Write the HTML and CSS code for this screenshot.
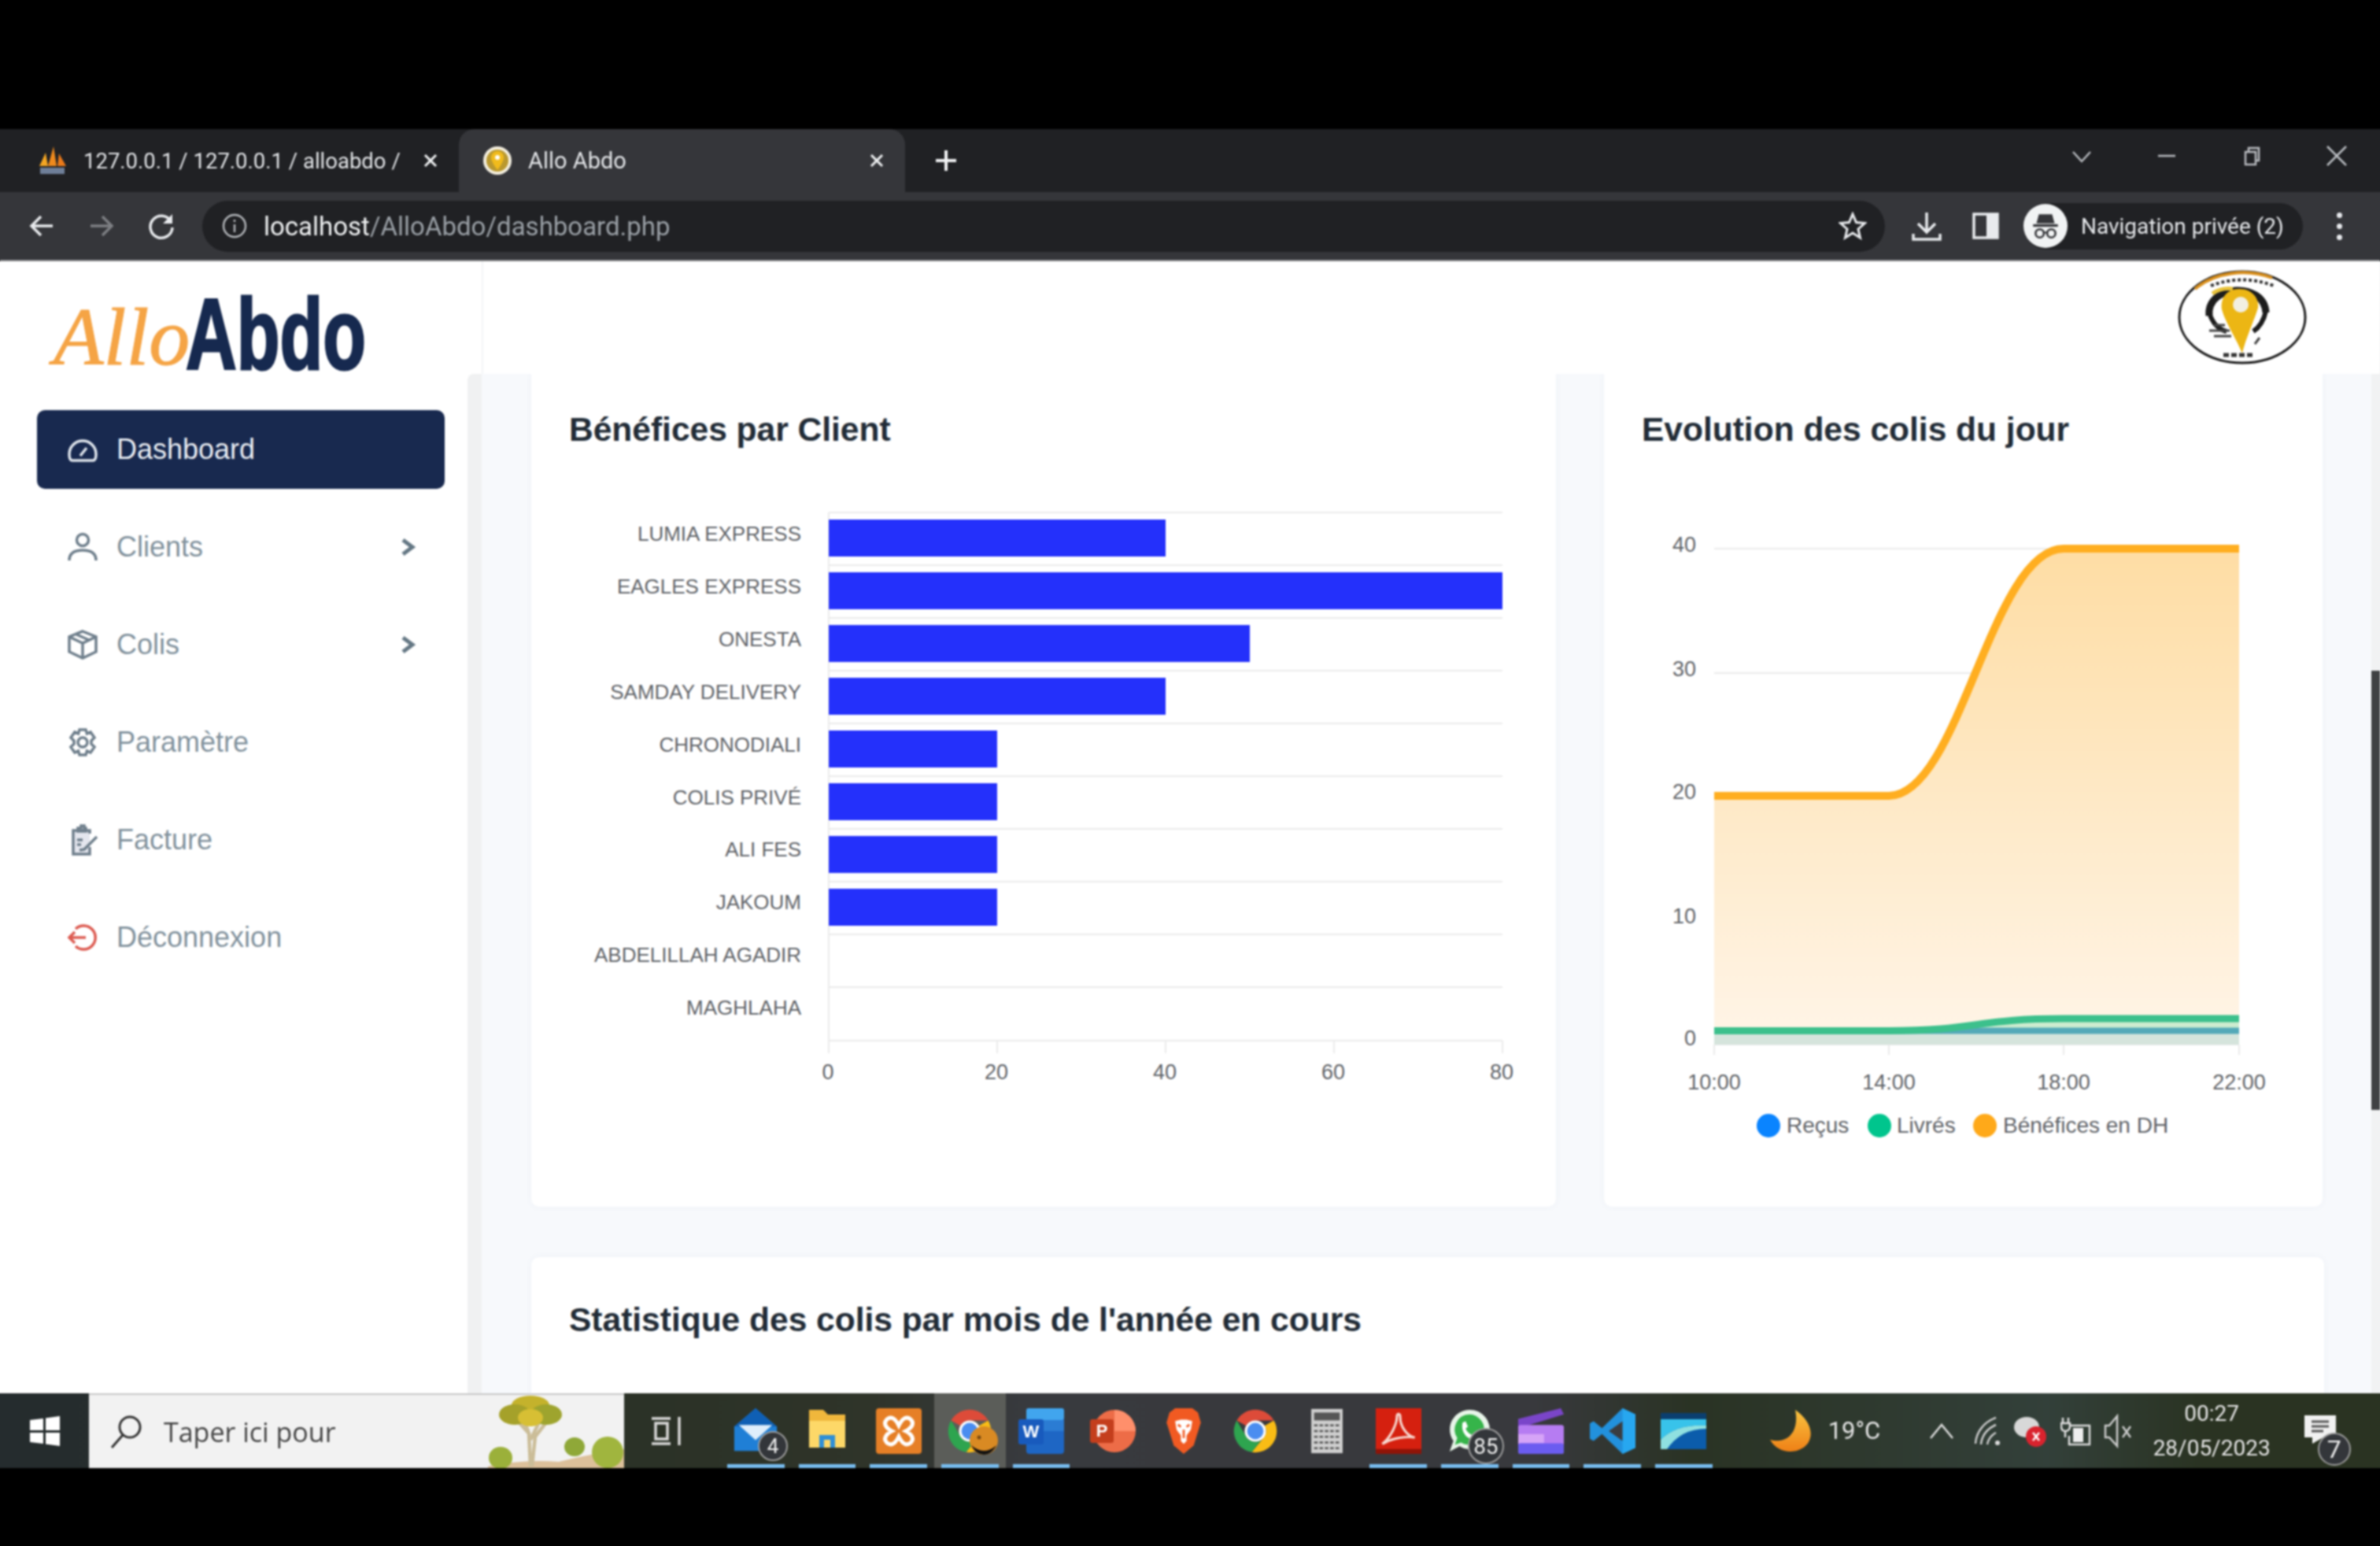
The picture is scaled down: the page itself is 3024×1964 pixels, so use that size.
FILE: index.html
```html
<!DOCTYPE html>
<html lang="fr">
<head>
    <meta charset="UTF-8">
    <title>Allo Abdo</title>
    <link rel="stylesheet" href="styles.css">
</head>
<body>
    <div class="screen">
    <div class="black-top"></div>

    <!-- Browser tabs -->
    <div class="tabstrip">
        <div class="tab">
            <svg class="favicon" viewBox="0 0 38 38">
                <polygon points="20,1 24,26 13,26" fill="#f08a1d"/>
                <polygon points="10,9 13,26 2,26" fill="#f5a623"/>
                <polygon points="27,10 36,26 25,26" fill="#e9791a"/>
                <rect x="3" y="28" width="31" height="8" fill="#6f7f99"/>
            </svg>
            <span class="tab-title tab-title-small">127.0.0.1 / 127.0.0.1 / alloabdo /</span>
            <span class="tab-close">
                <svg viewBox="0 0 20 20"><path d="M3 3L17 17M17 3L3 17"/></svg>
            </span>
        </div>
        <div class="tab tab-active">
            <svg class="favicon" viewBox="0 0 38 38">
                <circle cx="19" cy="19" r="18" fill="#f4efe0"/>
                <circle cx="19" cy="19" r="14" fill="#b9982f"/>
                <path d="M19 7a8 8 0 0 1 8 8c0 6-8 16-8 16s-8-10-8-16a8 8 0 0 1 8-8z" fill="#f1bb1c"/>
                <circle cx="19" cy="15" r="3" fill="#fff"/>
            </svg>
            <span class="tab-title">Allo Abdo</span>
            <span class="tab-close">
                <svg viewBox="0 0 20 20"><path d="M3 3L17 17M17 3L3 17"/></svg>
            </span>
        </div>
        <svg class="tab-plus" viewBox="0 0 30 30"><path d="M15 2V28M2 15H28"/></svg>
        <div class="window-controls">
            <svg viewBox="0 0 30 30"><path d="M4 10L15 22L26 10"/></svg>
            <svg viewBox="0 0 30 30"><path d="M4 15H26"/></svg>
            <svg viewBox="0 0 30 30"><path d="M7 10H20V26H7zM11 10V5H24V21H20"/></svg>
            <svg viewBox="0 0 30 30"><path d="M3 3L27 27M27 3L3 27"/></svg>
        </div>
    </div>

    <!-- Browser toolbar -->
    <div class="toolbar">
        <svg class="tool-icon" viewBox="0 0 36 36"><path d="M32 18H5M17 6L5 18L17 30"/></svg>
        <svg class="tool-icon tool-off" viewBox="0 0 36 36"><path d="M4 18H31M19 6L31 18L19 30"/></svg>
        <svg class="tool-icon" viewBox="0 0 36 36"><path d="M30 12A14 14 0 1 0 32 20"/><path class="icon-fill" d="M32 3V15H20z"/></svg>
        <div class="address">
            <svg class="info-icon" viewBox="0 0 34 34"><circle cx="17" cy="17" r="14"/><path d="M17 15V25M17 9V12"/></svg>
            <span class="url"><b>localhost</b>/AlloAbdo/dashboard.php</span>
            <svg class="star-icon" viewBox="0 0 36 36"><path d="M18 3L22.500 13.500L33.500 14.500L25 22L27.500 33L18 27L8.500 33L11 22L2.500 14.500L13.500 13.500z"/></svg>
        </div>
        <svg class="tool-icon tool-download" viewBox="0 0 40 40"><path d="M20 3V27M9 17L20 28L31 17M3 30V37H37V30"/></svg>
        <svg class="tool-icon tool-panel" viewBox="0 0 36 36"><path d="M3 3H33V33H3z"/><path class="icon-fill" d="M19 3H33V33H19z"/></svg>
        <div class="incognito">
            <span class="incognito-avatar">
                <svg viewBox="0 0 40 40">
                    <path d="M12 6H28L31 17H9z" fill="#35363a"/>
                    <rect x="5" y="18" width="30" height="3" fill="#35363a"/>
                    <circle cx="13" cy="29" r="5" fill="none" stroke="#35363a" stroke-width="2.500"/>
                    <circle cx="27" cy="29" r="5" fill="none" stroke="#35363a" stroke-width="2.500"/>
                    <path d="M18 28H22" stroke="#35363a" stroke-width="2"/>
                </svg>
            </span>
            <span class="incognito-text">Navigation privée (2)</span>
        </div>
        <div class="menu-dots"><i></i><i></i><i></i></div>
    </div>

    <!-- Page -->
    <div class="app">
        <aside class="sidebar">
            <div class="logo"><span class="logo-allo">Allo</span><span class="logo-abdo">Abdo</span></div>
            <nav class="menu">
                <a class="menu-item active" href="#">
                    <svg class="menu-icon" viewBox="0 0 40 40"><path d="M3 26A17 17 0 0 1 37 26Q37 34 33 34H7Q3 34 3 26z"/><path d="M17 28L25 18"/></svg>
                    Dashboard
                </a>
                <a class="menu-item" href="#">
                    <svg class="menu-icon" viewBox="0 0 40 40"><circle cx="20" cy="11" r="7.500"/><path d="M3 37C3 27 11 24 20 24S37 27 37 37"/></svg>
                    Clients
                    <svg class="chevron" viewBox="0 0 20 24"><path d="M3 3L15 12L3 21"/></svg>
                </a>
                <a class="menu-item" href="#">
                    <svg class="menu-icon" viewBox="0 0 40 40"><path d="M20 3L37 10V29L20 37L3 29V10zM3 10L20 18L37 10M20 18V37M11 6.500L28 14"/></svg>
                    Colis
                    <svg class="chevron" viewBox="0 0 20 24"><path d="M3 3L15 12L3 21"/></svg>
                </a>
                <a class="menu-item" href="#">
                    <svg class="menu-icon" viewBox="0 0 40 40"><path d="M16 4H24L25.500 9L30 7L35 14L31 18V22L35 26L30 33L25.500 31L24 36H16L14.500 31L10 33L5 26L9 22V18L5 14L10 7L14.500 9z"/><circle cx="20" cy="20" r="6"/></svg>
                    Paramètre
                </a>
                <a class="menu-item" href="#">
                    <svg class="menu-icon" viewBox="0 0 40 40"><path d="M29 12V8H8V38H29V29" fill="#e4e6ee"/><path d="M14 9V5H18V2H22V5H24V9zM13 20H20M13 26H18M16 33L22 32L38 16"/></svg>
                    Facture
                </a>
                <a class="menu-item" href="#">
                    <svg class="menu-icon icon-red" viewBox="0 0 40 40"><path d="M11 9A15 15 0 1 1 11 31M24 20H3M10 13L3 20L10 27"/></svg>
                    Déconnexion
                </a>
            </nav>
            <div class="sidebar-scroll"></div>
        </aside>

        <div class="main">
            <header class="topbar">
                <svg class="avatar" viewBox="0 0 164 120">
                    <ellipse cx="82" cy="60" rx="80" ry="58" fill="#fff" stroke="#1c1c1c" stroke-width="3"/>
                    <path d="M22 24A79 57 0 0 1 120 10" fill="none" stroke="#d98f1c" stroke-width="4"/>
                    <path d="M42 20Q82 5 122 20" fill="none" stroke="#333" stroke-width="4" stroke-dasharray="4 3"/>
                    <g transform="translate(-6 0)">
                        <path d="M46 58C42 18 116 14 118 54" fill="none" stroke="#1c1c1c" stroke-width="9"/>
                        <path d="M46 54Q52 74 68 78M118 52Q114 70 102 78" fill="none" stroke="#1c1c1c" stroke-width="6"/>
                        <path d="M50 30Q62 22 76 24" fill="none" stroke="#e8c23a" stroke-width="5"/>
                        <path d="M84 24C102 24 110 38 108 48C104 62 92 88 88 106C82 90 66 66 62 50C60 36 68 24 84 24z" fill="#ecb614"/>
                        <circle cx="86" cy="44" r="10" fill="#f2efe2"/>
                        <path d="M52 70H66M46 77H72M52 84H74M104 94L110 86" stroke="#444" stroke-width="3"/>
                    </g>
                    <path d="M58 108H98" stroke="#333" stroke-width="5" stroke-dasharray="7 3"/>
                </svg>
            </header>
            <div class="content">
                <div class="row">
                    <section class="card card-clients">
                        <h2>Bénéfices par Client</h2>
                        <svg class="chart" viewBox="675 600 1302 880">
                            <g class="grid">
                                <path d="M1053 651V1322M1053 651H1909M1053 718H1909M1053 785H1909M1053 852H1909M1053 919H1909M1053 986H1909M1053 1053H1909M1053 1120H1909M1053 1187H1909M1053 1254H1909M1053 1322H1909"/>
                                <path d="M1053 1322V1338M1267 1322V1338M1481 1322V1338M1695 1322V1338M1909 1322V1338"/>
                            </g>
                            <g class="bars">
                                <rect x="1053" y="660" width="428" height="47"/>
                                <rect x="1053" y="727" width="856" height="47"/>
                                <rect x="1053" y="794" width="535" height="47"/>
                                <rect x="1053" y="861" width="428" height="47"/>
                                <rect x="1053" y="928" width="214" height="47"/>
                                <rect x="1053" y="995" width="214" height="47"/>
                                <rect x="1053" y="1062" width="214" height="47"/>
                                <rect x="1053" y="1129" width="214" height="47"/>
                            </g>
                            <g class="labels labels-end labels-client">
                                <text x="1018" y="687">LUMIA EXPRESS</text>
                                <text x="1018" y="754">EAGLES EXPRESS</text>
                                <text x="1018" y="821">ONESTA</text>
                                <text x="1018" y="888">SAMDAY DELIVERY</text>
                                <text x="1018" y="955">CHRONODIALI</text>
                                <text x="1018" y="1022">COLIS PRIVÉ</text>
                                <text x="1018" y="1088">ALI FES</text>
                                <text x="1018" y="1155">JAKOUM</text>
                                <text x="1018" y="1222">ABDELILLAH AGADIR</text>
                                <text x="1018" y="1289">MAGHLAHA</text>
                            </g>
                            <g class="labels labels-middle">
                                <text x="1052" y="1371">0</text>
                                <text x="1266" y="1371">20</text>
                                <text x="1480" y="1371">40</text>
                                <text x="1694" y="1371">60</text>
                                <text x="1908" y="1371">80</text>
                            </g>
                        </svg>
                    </section>
                    <section class="card card-evolution">
                        <h2>Evolution des colis du jour</h2>
                        <svg class="chart" viewBox="2038 600 913 880">
                            <defs>
                                <linearGradient id="orangeFill" x1="0" y1="0" x2="0" y2="1">
                                    <stop offset="0" stop-color="#fedda4"/>
                                    <stop offset="1" stop-color="#fff5e8"/>
                                </linearGradient>
                            </defs>
                            <g class="grid">
                                <path d="M2178 697H2845M2178 855H2845M2178 1011H2845M2178 1169H2845"/>
                                <path d="M2178 1327H2845M2178 1327V1340M2400 1327V1340M2622 1327V1340M2845 1327V1340"/>
                            </g>
                            <path d="M2178 1011H2400C2490 1011 2530 697 2622 697H2845V1327H2178z" fill="url(#orangeFill)"/>
                            <path d="M2178 1011H2400C2490 1011 2530 697 2622 697H2845" class="line line-orange"/>
                            <path d="M2178 1309H2400C2511 1309 2511 1294 2622 1294H2845V1327H2178z" fill="#cdeccf"/>
                            <path d="M2178 1309H2845V1327H2178z" fill="#d5e4dc"/>
                            <path d="M2400 1309.500H2845" class="line line-blue"/>
                            <path d="M2178 1309.500H2400C2511 1309.500 2511 1294 2622 1294H2845" class="line line-green"/>
                            <g class="labels labels-end">
                                <text x="2155" y="701">40</text>
                                <text x="2155" y="859">30</text>
                                <text x="2155" y="1015">20</text>
                                <text x="2155" y="1173">10</text>
                                <text x="2155" y="1328">0</text>
                            </g>
                            <g class="labels labels-middle">
                                <text x="2178" y="1384">10:00</text>
                                <text x="2400" y="1384">14:00</text>
                                <text x="2622" y="1384">18:00</text>
                                <text x="2845" y="1384">22:00</text>
                            </g>
                            <circle cx="2247" cy="1430" r="15" fill="#0a84ff"/>
                            <circle cx="2388" cy="1430" r="15" fill="#00c58d"/>
                            <circle cx="2522" cy="1430" r="15" fill="#ffa919"/>
                            <g class="labels labels-legend">
                                <text x="2270" y="1439">Reçus</text>
                                <text x="2410" y="1439">Livrés</text>
                                <text x="2545" y="1439">Bénéfices en DH</text>
                            </g>
                        </svg>
                    </section>
                </div>
                <section class="card card-wide">
                    <h2>Statistique des colis par mois de l'année en cours</h2>
                </section>
            </div>
            <div class="page-scroll"><div class="page-thumb"></div></div>
        </div>
    </div>

    <!-- Windows taskbar -->
    <div class="taskbar">
        <svg style="display:none">
            <symbol id="chrome" viewBox="0 0 64 64">
                <path d="M58 17A30 30 0 0 1 27 61.600L45 39.500A15 15 0 0 0 45 24.500z" fill="#f9bc15"/>
                <path d="M6 17A30 30 0 0 0 27 61.600L40 45A15 15 0 0 1 19 39.500z" fill="#2ea44f"/>
                <path d="M6 17A30 30 0 0 1 58 17H32A15 15 0 0 0 19 24.500z" fill="#dd4b39"/>
                <circle cx="32" cy="32" r="15" fill="#fff"/>
                <circle cx="32" cy="32" r="11.500" fill="#4a8df0"/>
            </symbol>
        </svg>
        <div class="start">
            <svg viewBox="0 0 38 38"><path d="M0 5L17 3V18H0zM20 2.500L38 0V18H20zM0 21H17V35L0 33zM20 21H38V38L20 35.500z" fill="#fff"/></svg>
        </div>
        <div class="search">
            <svg class="search-glass" viewBox="0 0 40 44"><circle cx="25" cy="16" r="13"/><path d="M16 26L2 42"/></svg>
            <span class="search-text">Taper ici pour</span>
            <svg class="search-tree" viewBox="0 0 173 92">
                <path d="M-10 92Q40 80 90 84Q130 74 173 68V92z" fill="#dcc09a"/>
                <path d="M54 90L52 48L36 30M52 48L44 26M54 56L68 28M56 90L60 52L74 34" fill="none" stroke="#cbbd98" stroke-width="4.500"/>
                <ellipse cx="54" cy="12" rx="24" ry="12" fill="#c4b22c"/>
                <ellipse cx="34" cy="24" rx="20" ry="13" fill="#a5a12a"/>
                <ellipse cx="74" cy="24" rx="20" ry="13" fill="#9ea42e"/>
                <ellipse cx="54" cy="28" rx="16" ry="11" fill="#d7bf34"/>
                <ellipse cx="16" cy="79" rx="15" ry="14" fill="#9bb03a"/>
                <ellipse cx="110" cy="65" rx="13" ry="12" fill="#8fa838"/>
                <ellipse cx="152" cy="72" rx="20" ry="20" fill="#a0b53e"/>
            </svg>
        </div>
        <div class="slot slot-taskview">
            <svg viewBox="0 0 40 40"><path d="M2 4H26M2 36H26M7 10H22V30H7zM37 2V38" fill="none" stroke="#d9d9d9" stroke-width="3.500"/></svg>
        </div>
        <div class="slot slot-open">
            <svg viewBox="0 0 56 60">
                <path d="M28 0L56 24V56H0V24z" fill="#1f7fd6"/>
                <path d="M28 0L56 24H0z" fill="#0f5fb4"/>
                <path d="M6 22H50L28 42z" fill="#dfeefb"/>
            </svg>
            <span class="count count-mail">4</span>
        </div>
        <div class="slot slot-open">
            <svg viewBox="0 0 50 58">
                <path d="M2 2H20L26 8H48V50H2z" fill="#f0b73c"/>
                <path d="M2 16H48V50H2z" fill="#fdd868"/>
                <path d="M15 50V34H35V50H29V40H21V50z" fill="#2f8fd6"/>
            </svg>
        </div>
        <div class="slot slot-open">
            <svg viewBox="0 0 58 58">
                <rect x="0" y="0" width="58" height="58" rx="4" fill="#e67f26"/>
                <path d="M14 14C22 8 27 18 29 22C31 18 36 8 44 14C52 22 38 29 38 29C38 29 52 36 44 44C36 50 31 40 29 36C27 40 22 50 14 44C6 36 20 29 20 29C20 29 6 22 14 14z" fill="none" stroke="#fff" stroke-width="5"/>
            </svg>
        </div>
        <div class="slot slot-open slot-active">
            <svg viewBox="0 0 64 64"><use href="#chrome"/></svg>
            <svg class="chrome-avatar" viewBox="0 0 36 36">
                <circle cx="18" cy="18" r="18" fill="#d98a23"/>
                <path d="M2 24Q18 38 34 24Q28 36 18 36Q8 36 2 24z" fill="#111"/>
                <circle cx="12" cy="14" r="2.500" fill="#7a4a10"/>
            </svg>
        </div>
        <div class="slot slot-open">
            <svg viewBox="0 0 58 58">
                <rect x="10" y="0" width="48" height="58" rx="4" fill="#1e66c4"/>
                <rect x="10" y="0" width="48" height="15" rx="3" fill="#41a5ee"/>
                <rect x="10" y="15" width="48" height="14" fill="#2b7cd3"/>
                <rect x="0" y="14" width="32" height="32" rx="3" fill="#185abd"/>
                <text class="office-letter" x="16" y="37">W</text>
            </svg>
        </div>
        <div class="slot slot-ppt">
            <svg viewBox="0 0 58 58">
                <circle cx="31" cy="29" r="27" fill="#ed6c47"/>
                <path d="M31 2A27 27 0 0 1 58 29H31z" fill="#ff8f6b"/>
                <rect x="0" y="14" width="30" height="30" rx="3" fill="#c43e1c"/>
                <text class="office-letter" x="15" y="36">P</text>
            </svg>
        </div>
        <div class="slot">
            <svg viewBox="0 0 48 64">
                <path d="M12 0H36L44 6L48 20L38 52L24 64L10 52L0 20L4 6z" fill="#f15a22"/>
                <path d="M12 18L20 16H28L36 18L34 30L28 38V46L24 50L20 46V38L14 30z" fill="#fff"/>
                <path d="M20 26L16 23M28 26L32 23M24 30V42" stroke="#f15a22" stroke-width="3"/>
            </svg>
        </div>
        <div class="slot">
            <svg viewBox="0 0 64 64"><use href="#chrome"/></svg>
        </div>
        <div class="slot">
            <svg viewBox="0 0 46 64">
                <rect x="1" y="1" width="44" height="62" fill="#cfcfcf"/>
                <rect x="5" y="6" width="36" height="11" fill="#555"/>
                <path d="M5 24H41M5 32H41M5 40H41M5 48H41M5 56H41" stroke="#555" stroke-width="3" stroke-dasharray="5 2.500"/>
            </svg>
        </div>
        <div class="slot slot-open">
            <svg viewBox="0 0 56 56">
                <rect width="56" height="56" fill="#d5200f"/>
                <rect y="50" width="56" height="6" fill="#8f1408"/>
                <path d="M8 44C18 36 26 20 26 10C26 6 30 6 30 11C30 22 38 34 48 36C40 34 20 36 8 44z" fill="none" stroke="#f7d8d0" stroke-width="3"/>
            </svg>
        </div>
        <div class="slot slot-open">
            <svg viewBox="0 0 58 60">
                <path d="M29 2A26 26 0 1 1 16 50L3 57L8 43A26 26 0 0 1 29 2z" fill="#e8f5e9"/>
                <path d="M29 8A20 20 0 1 1 18 45L10 48L13 39A20 20 0 0 1 29 8z" fill="#36b44a"/>
                <path d="M20 19L24 17L27 24L24 27Q27 33 32 35L35 32L42 36L39 41Q30 42 24 36Q18 29 20 19z" fill="#fff"/>
            </svg>
            <span class="count count-whatsapp">85</span>
        </div>
        <div class="slot slot-open">
            <svg viewBox="0 0 60 60">
                <path d="M0 14L56 0L60 8L8 24H0z" fill="#7a45c9"/>
                <rect y="22" width="60" height="38" rx="3" fill="#b67cf2"/>
                <rect y="34" width="34" height="12" fill="#d6a4f7"/>
                <rect y="46" width="60" height="14" rx="3" fill="#6b5cf0"/>
            </svg>
        </div>
        <div class="slot slot-open">
            <svg viewBox="0 0 60 60">
                <path d="M43 0L60 8V52L43 60L16 34L5 43L0 40V20L5 17L16 26z" fill="#2291dd"/>
                <path d="M43 0L60 8V52L43 60z" fill="#27a7f0"/>
                <path d="M43 17L25 30L43 43z" fill="#3a3c40"/>
            </svg>
        </div>
        <div class="slot slot-open">
            <svg viewBox="0 0 58 46">
                <rect width="58" height="46" fill="#0b5cab"/>
                <rect width="58" height="8" fill="#0b3f6f"/>
                <path d="M0 8H58V16Q20 14 0 34z" fill="#38c3ea"/>
                <path d="M0 34Q20 14 58 16V20Q26 20 8 46H0z" fill="#8fe0e0"/>
            </svg>
        </div>
        <div class="tray">
            <svg class="tray-moon" viewBox="0 0 54 54">
                <defs>
                    <linearGradient id="moonFill" x1="0" y1="0" x2="0" y2="1">
                        <stop offset="0" stop-color="#f9c440"/>
                        <stop offset="1" stop-color="#ef8016"/>
                    </linearGradient>
                </defs>
                <path d="M32 0C50 12 58 32 46 45C34 57 10 56 0 38C20 44 38 30 32 0z" fill="url(#moonFill)"/>
            </svg>
            <span class="tray-temp">19°C</span>
            <svg class="tray-chevron" viewBox="0 0 32 22"><path d="M2 20L16 3L30 20"/></svg>
            <svg class="tray-wifi" viewBox="0 0 36 40"><path d="M2 36C3 20 14 8 28 3M9 37C10 26 17 17 28 12M17 37C18 31 21 26 28 22"/><circle cx="30" cy="35" r="3" fill="#ddd" stroke="none"/></svg>
            <svg class="tray-cloud" viewBox="0 0 42 46">
                <ellipse cx="17" cy="18" rx="16" ry="13" fill="#d8d8d8"/>
                <circle cx="29" cy="30" r="13" fill="#d9232e"/>
                <path d="M25 25L33 35M33 25L25 35" stroke="#fff" stroke-width="2.500"/>
            </svg>
            <svg class="tray-battery" viewBox="0 0 40 38">
                <path d="M11 12H37V36H11V25" fill="none" stroke="#ddd" stroke-width="2.500"/>
                <path d="M16 15H29V33H16z" fill="#eee"/>
                <path d="M3 2V9M10 2V9M1 9H12V13Q12 19 6 19Q1 19 1 13zM6 19V27" fill="none" stroke="#ddd" stroke-width="2.500"/>
            </svg>
            <svg class="tray-sound" viewBox="0 0 36 44"><path d="M17 3V41L7 30H2V15H7z"/><path d="M24 16L34 30M34 16L24 30"/></svg>
            <div class="clock">
                <span>00:27</span>
                <span>28/05/2023</span>
            </div>
            <div class="notif">
                <svg viewBox="0 0 40 36"><path d="M0 0H40V28H24L10 36V28H0z" fill="#f1f1f1"/><path d="M9 8H31M9 14H31M9 20H24" stroke="#555" stroke-width="3"/></svg>
                <span class="count count-notif">7</span>
            </div>
        </div>
    </div>

    <div class="black-bottom"></div>
    </div>
</body>
</html>
```

FILE: styles.css
```css
* {
    box-sizing: border-box;
}
html, body {
    margin: 0;
    padding: 0;
    background-color: #000000;
}
body {
    width: 3024px;
    height: 1964px;
    overflow: hidden;
    font-family: "Liberation Sans", Arial, sans-serif;
}
.screen {
    filter: blur(0.8px);
}
.black-top {
    height: 164px;
    background-color: #000000;
}
.black-bottom {
    height: 99px;
    background-color: #000000;
}

/* Browser tabs */
.tabstrip {
    height: 80px;
    background-color: #202124;
    box-shadow: -8px 0 0 #202124, 8px 0 0 #202124;
    display: flex;
    align-items: stretch;
    color: #e8eaed;
    font-family: Roboto, sans-serif;
}
.tab {
    width: 583px;
    padding-left: 48px;
    display: flex;
    align-items: center;
    position: relative;
}
.tab-active {
    width: 567px;
    padding-left: 30px;
    background-color: #35363a;
    border-radius: 20px 20px 0 0;
}
.favicon {
    width: 38px;
    height: 38px;
    flex: none;
}
.tab-title {
    margin-left: 20px;
    font-size: 29px;
    white-space: nowrap;
    color: #e3e5e8;
}
.tab-title-small {
    font-size: 27.5px;
}
.tab-close {
    position: absolute;
    right: 26px;
    top: 30px;
    width: 20px;
    height: 20px;
}
.tab-close svg, .tab-plus, .window-controls svg {
    display: block;
    fill: none;
    stroke: #f1f3f4;
    stroke-width: 3;
}
.tab-plus {
    width: 30px;
    height: 30px;
    margin: 25px 0 0 37px;
    stroke-width: 4;
}
.window-controls {
    margin-left: auto;
    display: flex;
    gap: 78px;
    padding: 19px 40px 0 0;
}
.window-controls svg {
    width: 30px;
    height: 30px;
    stroke: #b9bcc0;
    stroke-width: 2.5;
}

/* Browser toolbar */
.toolbar {
    height: 88px;
    background-color: #35363a;
    border-bottom: 2px solid #8d8e90;
    box-shadow: -8px 0 0 #35363a, 8px 0 0 #35363a;
    display: flex;
    align-items: center;
    padding-left: 35px;
    position: relative;
}
.tool-icon {
    width: 36px;
    height: 36px;
    margin-right: 40px;
    flex: none;
    fill: none;
    stroke: #e8eaed;
    stroke-width: 3.5;
}
.tool-icon .icon-fill {
    fill: #e8eaed;
    stroke: none;
}
.tool-off {
    stroke: #7d7f83;
}
.address {
    width: 2138px;
    height: 65px;
    margin-left: -6px;
    background-color: #202124;
    border-radius: 33px;
    display: flex;
    align-items: center;
    padding-left: 24px;
    flex: none;
}
.info-icon {
    width: 34px;
    height: 34px;
    fill: none;
    stroke: #b4b7bb;
    stroke-width: 2.5;
}
.url {
    margin-left: 20px;
    font-family: Roboto, sans-serif;
    font-size: 33px;
    color: #9aa0a6;
}
.url b {
    font-weight: 400;
    color: #f1f3f4;
}
.star-icon {
    width: 36px;
    height: 36px;
    margin-left: auto;
    margin-right: 23px;
    fill: none;
    stroke: #e8eaed;
    stroke-width: 3;
}
.tool-download {
    width: 40px;
    height: 40px;
    margin: 0 0 0 33px;
}
.tool-panel {
    margin: 0 0 0 37px;
}
.incognito {
    width: 355px;
    height: 59px;
    margin-left: 30px;
    background-color: #202124;
    border-radius: 30px;
    display: flex;
    align-items: center;
    flex: none;
}
.incognito-avatar {
    width: 56px;
    height: 56px;
    background-color: #f1f3f4;
    border-radius: 50%;
    display: flex;
    align-items: center;
    justify-content: center;
}
.incognito-avatar svg {
    width: 42px;
    height: 42px;
}
.incognito-text {
    margin-left: 17px;
    font-family: Roboto, sans-serif;
    font-size: 28px;
    color: #e8eaed;
    white-space: nowrap;
}
.menu-dots {
    margin-left: 43px;
    display: flex;
    flex-direction: column;
    gap: 7px;
}
.menu-dots i {
    width: 7px;
    height: 7px;
    border-radius: 50%;
    background-color: #e8eaed;
}

/* Page */
.app {
    height: 1438px;
    display: flex;
    background-color: #ffffff;
    box-shadow: -8px 0 0 #ffffff, 8px 0 0 #f1f2f3;
    overflow: hidden;
}
.sidebar {
    width: 612px;
    flex: none;
    position: relative;
    background-color: #ffffff;
}
.logo {
    height: 189px;
    padding: 30px 0 0 68px;
    white-space: nowrap;
    display: flex;
    align-items: flex-start;
}
.logo-allo {
    font-family: "Liberation Serif", serif;
    font-style: italic;
    font-size: 104px;
    line-height: 132px;
    color: #f5a445;
    -webkit-text-stroke: 1px #f5a445;
    width: 168px;
}
.logo-abdo {
    display: inline-block;
    font-weight: bold;
    font-size: 128px;
    line-height: 125px;
    color: #16294f;
    -webkit-text-stroke: 3px #16294f;
    transform: scaleX(0.7);
    transform-origin: left center;
}
.menu {
    width: 518px;
    margin-left: 47px;
    display: flex;
    flex-direction: column;
    gap: 24px;
}
.menu-item {
    height: 100px;
    padding: 0 36px 0 38px;
    display: flex;
    align-items: center;
    border-radius: 10px;
    color: #82929d;
    font-size: 36px;
    text-decoration: none;
}
.menu-item.active {
    background-color: #18294f;
    color: #e9edf3;
}
.menu-icon {
    width: 40px;
    height: 40px;
    margin-right: 23px;
    flex: none;
    fill: none;
    stroke: #6f7f8c;
    stroke-width: 3.5;
}
.menu-item.active .menu-icon {
    stroke: #dfe5ec;
}
.menu-icon.icon-red {
    stroke: #dc5a50;
}
.chevron {
    width: 20px;
    height: 24px;
    margin-left: auto;
    fill: none;
    stroke: #647784;
    stroke-width: 5;
}
.sidebar-scroll {
    position: absolute;
    left: 594px;
    top: 143px;
    bottom: 0;
    width: 18px;
    background-color: #f0f1f2;
    border-radius: 8px 0 0 0;
}
.main {
    flex: 1;
    min-width: 0;
    position: relative;
    display: grid;
    grid-template-columns: 1fr 11px;
    grid-template-rows: 143px 1fr;
    background-color: #f7f9fc;
}
.topbar {
    grid-column: 1 / 3;
    background-color: #ffffff;
    border-left: 2px solid #f3f4f6;
    display: flex;
    justify-content: flex-end;
    padding: 11px 93px 0 0;
}
.avatar {
    width: 164px;
    height: 120px;
}
.content {
    padding: 0 60px 0 63px;
    overflow: hidden;
}
.row {
    display: flex;
    gap: 61px;
    margin-bottom: 64px;
}
.card {
    background-color: #ffffff;
    border-radius: 0 0 10px 10px;
    box-shadow: 0 0 8px rgba(90, 110, 160, 0.06);
}
.card h2 {
    margin: 0;
    padding: 48px 0 0 48px;
    font-size: 42.5px;
    line-height: 46px;
    font-weight: bold;
    color: #212b36;
}
.card-clients {
    width: 1302px;
    height: 1058px;
}
.card-evolution {
    width: 913px;
    height: 1058px;
}
.card-wide {
    height: 300px;
    border-radius: 10px;
    padding-top: 9px;
}
.chart {
    display: block;
    width: 100%;
    height: 880px;
    margin-top: 31px;
}
.grid path {
    fill: none;
    stroke: #ebebeb;
    stroke-width: 2;
}
.bars rect {
    fill: #2430fb;
}
.labels text {
    font-family: "Liberation Sans", Arial, sans-serif;
    font-size: 27px;
    fill: #5f6368;
}
.labels-end text {
    text-anchor: end;
}
.labels-middle text {
    text-anchor: middle;
}
.labels-client text {
    font-size: 26px;
}
.labels-legend text {
    font-size: 28px;
}
.line {
    fill: none;
    stroke-width: 8;
}
.line-orange {
    stroke: #ffae20;
    stroke-width: 10;
}
.line-green {
    stroke: #3cc08c;
    stroke-width: 9;
}
.line-blue {
    stroke: #54a9b8;
}
.page-scroll {
    background-color: #f1f2f3;
    position: relative;
}
.page-thumb {
    position: absolute;
    left: 0;
    right: 0;
    top: 377px;
    height: 558px;
    background-color: #3f4143;
}

/* Windows taskbar */
.taskbar {
    height: 95px;
    display: flex;
    align-items: stretch;
    background: linear-gradient(to right, #252c2e 0, #2b3227 800px, #2f3429 1100px, #383a3e 1300px, #38393d 1950px, #2a3324 2150px, #33403a 2600px, #2a3322 2800px, #2a3322 100%);
    box-shadow: -8px 0 0 #252c2e, 8px 0 0 #2a3322;
    position: relative;
}
.start {
    width: 113px;
    display: flex;
    align-items: center;
    justify-content: center;
}
.start svg {
    width: 38px;
    height: 38px;
}
.search {
    width: 680px;
    background-color: #f2f2f2;
    border-top: 2px solid #c8c8c8;
    display: flex;
    align-items: center;
    position: relative;
    padding-left: 27px;
}
.search-glass {
    width: 40px;
    height: 44px;
    fill: none;
    stroke: #333333;
    stroke-width: 3;
}
.search-text {
    margin-left: 28px;
    font-family: "Open Sans", sans-serif;
    font-size: 34px;
    color: #444444;
}
.search-tree {
    position: absolute;
    right: 0;
    bottom: 0;
    width: 173px;
    height: 92px;
    overflow: hidden;
}
.slot {
    width: 90.7px;
    display: flex;
    align-items: center;
    justify-content: center;
    position: relative;
}
.slot > svg:first-child {
    width: 58px;
    height: 58px;
    overflow: visible;
}
.slot-taskview {
    width: 122px;
}
.slot-taskview > svg:first-child {
    width: 40px;
    height: 40px;
    margin-right: 16px;
}
.slot-open::after {
    content: "";
    position: absolute;
    left: 9px;
    right: 9px;
    bottom: 0;
    height: 5px;
    background-color: #78bdf0;
}
.slot-active {
    background-color: #5b5d59;
}
.chrome-avatar {
    position: absolute;
    left: 45px;
    top: 42px;
    width: 36px;
    height: 36px;
}
.office-letter {
    font-family: "Liberation Sans", Arial, sans-serif;
    font-size: 22px;
    font-weight: bold;
    fill: #ffffff;
    text-anchor: middle;
}
.count {
    position: absolute;
    border: 2px solid #9c9c9c;
    border-radius: 50%;
    background-color: #33363a;
    color: #eeeeee;
    font-family: Roboto, sans-serif;
    display: flex;
    align-items: center;
    justify-content: center;
}
.count-mail {
    left: 48px;
    top: 48px;
    width: 38px;
    height: 38px;
    font-size: 26px;
}
.count-whatsapp {
    left: 43px;
    top: 44px;
    width: 46px;
    height: 46px;
    font-size: 28px;
}
.count-notif {
    left: 17px;
    top: 33px;
    width: 42px;
    height: 42px;
    font-size: 32px;
}
.tray {
    display: flex;
    align-items: center;
    flex: 1;
    color: #e6e6e6;
    font-family: Roboto, sans-serif;
    padding-left: 64px;
}
.tray svg {
    flex: none;
}
.tray-moon {
    width: 54px;
    height: 54px;
}
.tray-temp {
    width: 70px;
    margin-left: 20px;
    font-size: 31px;
    white-space: nowrap;
}
.tray-chevron {
    width: 32px;
    height: 22px;
    margin-left: 58px;
    fill: none;
    stroke: #dddddd;
    stroke-width: 2.5;
}
.tray-wifi {
    width: 36px;
    height: 40px;
    margin-left: 25px;
    fill: none;
    stroke: #cccccc;
    stroke-width: 2.5;
}
.tray-cloud {
    width: 42px;
    height: 46px;
    margin-left: 14px;
}
.tray-battery {
    width: 40px;
    height: 38px;
    margin-left: 18px;
}
.tray-sound {
    width: 36px;
    height: 44px;
    margin-left: 15px;
    fill: none;
    stroke: #cccccc;
    stroke-width: 2.5;
}
.clock {
    width: 145px;
    margin-left: 29px;
    display: flex;
    flex-direction: column;
    align-items: center;
    gap: 14px;
    font-size: 28px;
    line-height: 30px;
    white-space: nowrap;
}
.notif {
    width: 62px;
    height: 62px;
    margin-left: 45px;
    position: relative;
}
.notif svg {
    position: absolute;
    left: 0;
    top: 11px;
    width: 40px;
    height: 36px;
}
```
